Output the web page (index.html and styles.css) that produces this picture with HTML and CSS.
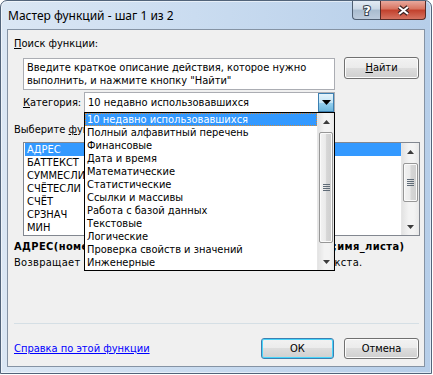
FILE: index.html
```html
<!DOCTYPE html>
<html lang="ru">
<head>
<meta charset="utf-8">
<title>Мастер функций</title>
<link rel="stylesheet" href="styles.css">
</head>
<body>
<div class="window">
  <div class="titlebar">
    <span class="title">Мастер функций - шаг 1 из 2</span>
    <div class="caption-btns">
      <div class="cbtn help">
        <svg width="14" height="16" viewBox="0 0 14 16"><text x="7" y="13" text-anchor="middle" class="qmark">?</text></svg>
      </div>
      <div class="cbtn close">
        <svg width="15" height="11" viewBox="0 0 15 11"><path d="M3 2 L12 9 M12 2 L3 9" stroke="#3b2222" stroke-width="4.2" fill="none"/><path d="M3 2 L12 9 M12 2 L3 9" stroke="#fff" stroke-width="2" fill="none"/></svg>
      </div>
    </div>
  </div>
  <div class="client">
    <div class="lbl top-label"><u>П</u>оиск функции:</div>
    <div class="search-row">
      <div class="search-box">Введите краткое описание действия, которое нужно выполнить, и нажмите кнопку "Найти"</div>
      <div class="btn btn-find"><u>Н</u>айти</div>
    </div>
    <div class="cat-row">
      <span class="cat-label"><u>К</u>атегория:</span>
      <div class="combo">
        <span class="combo-text">10 недавно использовавшихся</span>
        <span class="combo-arrow"><svg width="9" height="5" viewBox="0 0 9 5"><polygon points="0,0 9,0 4.5,5" fill="#000"/></svg></span>
        <div class="dropdown">
          <div class="dd-items">
            <div class="dd-item sel">10 недавно использовавшихся</div>
            <div class="dd-item">Полный алфавитный перечень</div>
            <div class="dd-item">Финансовые</div>
            <div class="dd-item">Дата и время</div>
            <div class="dd-item">Математические</div>
            <div class="dd-item">Статистические</div>
            <div class="dd-item">Ссылки и массивы</div>
            <div class="dd-item">Работа с базой данных</div>
            <div class="dd-item">Текстовые</div>
            <div class="dd-item">Логические</div>
            <div class="dd-item">Проверка свойств и значений</div>
            <div class="dd-item">Инженерные</div>
          </div>
          <div class="scrollbar sb-dd">
            <div class="sb-btn"><svg width="7" height="4" viewBox="0 0 7 4"><polygon points="0,4 7,4 3.5,0" fill="#3c3c3c"/></svg></div>
            <div class="sb-thumb thumb-dd"><span class="grip"></span></div>
            <div class="sb-fill"></div>
            <div class="sb-btn"><svg width="7" height="4" viewBox="0 0 7 4"><polygon points="0,0 7,0 3.5,4" fill="#3c3c3c"/></svg></div>
          </div>
        </div>
      </div>
    </div>
    <div class="lbl choose-label">Выберите <u>ф</u>ункцию:</div>
    <div class="func-list">
      <div class="fl-items">
        <div class="fl-item sel">АДРЕС</div>
        <div class="fl-item">БАТТЕКСТ</div>
        <div class="fl-item">СУММЕСЛИ</div>
        <div class="fl-item">СЧЁТЕСЛИ</div>
        <div class="fl-item">СЧЁТ</div>
        <div class="fl-item">СРЗНАЧ</div>
        <div class="fl-item">МИН</div>
      </div>
      <div class="scrollbar sb-fl">
        <div class="sb-btn"><svg width="7" height="4" viewBox="0 0 7 4"><polygon points="0,4 7,4 3.5,0" fill="#3c3c3c"/></svg></div>
        <div class="sb-thumb thumb-fl"><span class="grip"></span></div>
        <div class="sb-fill"></div>
        <div class="sb-btn"><svg width="7" height="4" viewBox="0 0 7 4"><polygon points="0,0 7,0 3.5,4" fill="#3c3c3c"/></svg></div>
      </div>
    </div>
    <div class="lbl syntax">АДРЕС(номер_строки;номер_столбца;тип_ссылки;a1;имя_листа)</div>
    <div class="lbl desc">Возвращает ссылку на отдельную ячейку листа в виде текста.</div>
    <div class="separator"></div>
    <div class="bottom-row">
      <span class="help-link">Справка по этой функции</span>
      <div class="btn btn-ok">ОК</div>
      <div class="btn btn-cancel">Отмена</div>
    </div>
  </div>
</div>
</body>
</html>
```
FILE: styles.css
```css
html, body {
  margin: 0;
  padding: 0;
  background: #ffffff;
}
body {
  font-family: "DejaVu Sans Condensed", "DejaVu Sans", sans-serif;
  font-size: 11px;
  color: #000;
}
.window {
  width: 432px;
  height: 374px;
  box-sizing: border-box;
  border: 1px solid #52647a;
  border-radius: 7px 7px 0 0;
  background: linear-gradient(to right, #dbe7f4 0%, #cadcf0 45%, #b6cee9 100%);
  padding: 0 6px 6px 6px;
  display: flex;
  flex-direction: column;
  box-shadow: inset 0 0 0 1px rgba(255,255,255,0.55);
}
.titlebar {
  height: 28px;
  display: flex;
  align-items: flex-start;
  flex: none;
}
.title {
  flex: 1;
  padding: 7px 0 0 1px;
  font-family: "Noto Sans", "Open Sans", sans-serif;
  font-size: 12px;
  line-height: 16px;
  color: #000;
}
.caption-btns {
  display: flex;
  margin-right: -1px;
}
.cbtn {
  height: 19px;
  box-sizing: border-box;
  display: flex;
  align-items: center;
  justify-content: center;
  border: 1px solid #4f5f72;
  border-top: none;
}
.help {
  width: 28px;
  border-radius: 0 0 0 4px;
  border-right: none;
  background: linear-gradient(#e3ebf4 0%, #cbd8e6 45%, #a9bccf 50%, #bccbdc 100%);
}
.close {
  width: 46px;
  border-radius: 0 0 4px 0;
  border-color: #5a2c28;
  background: linear-gradient(#e8a89d 0%, #d8735f 45%, #c2402c 50%, #d67361 100%);
}
.qmark {
  font-family: "DejaVu Sans", sans-serif;
  font-weight: bold;
  font-size: 13px;
  fill: #ffffff;
  stroke: #34404d;
  stroke-width: 2px;
  paint-order: stroke;
}
.client {
  flex: 1;
  background: #f0f0f0;
  border: 1px solid #8593a4;
  padding: 7px 5px 0 6px;
  display: flex;
  flex-direction: column;
}
.lbl {
  height: 14px;
  line-height: 14px;
  white-space: nowrap;
}
.search-row {
  margin-top: 6px;
  height: 33px;
  display: flex;
  align-items: flex-start;
}
.search-box {
  margin: 1px 0 0 9px;
  width: 312px;
  height: 32px;
  box-sizing: border-box;
  border: 1px solid #abadb3;
  background: #fff;
  padding: 2px 3px;
  line-height: 13px;
  overflow: hidden;
}
.btn {
  box-sizing: border-box;
  height: 22px;
  border: 1px solid #707070;
  border-radius: 3px;
  background: linear-gradient(#f2f2f2 0%, #ebebeb 49%, #dddddd 50%, #cfcfcf 100%);
  box-shadow: inset 0 0 0 1px #fcfcfc;
  display: flex;
  align-items: center;
  justify-content: center;
  line-height: 14px;
}
.btn-find {
  margin-left: 9px;
  width: 75px;
}
.cat-row {
  margin-top: 2px;
  height: 21px;
  display: flex;
  align-items: center;
}
.cat-label {
  margin-left: 9px;
  width: 61px;
  line-height: 14px;
}
.combo {
  position: relative;
  width: 251px;
  height: 21px;
  box-sizing: border-box;
  border: 1px solid #abadb3;
  background: #fff;
  display: flex;
}
.combo-text {
  flex: 1;
  padding-left: 3px;
  line-height: 19px;
}
.combo-arrow {
  width: 16px;
  height: 19px;
  box-sizing: border-box;
  border: 1px solid #3c7fb1;
  background: linear-gradient(#e5f4fc 0%, #c4e5f6 50%, #98d1ef 51%, #6cb6dd 100%);
  display: flex;
  align-items: center;
  justify-content: center;
}
.dropdown {
  position: absolute;
  left: -1px;
  top: 19px;
  width: 251px;
  height: 159px;
  box-sizing: border-box;
  border: 1px solid #000;
  background: #fff;
  display: flex;
  z-index: 10;
}
.dd-items {
  flex: 1;
  overflow: hidden;
}
.dd-item {
  height: 13px;
  line-height: 13px;
  padding-left: 2px;
  white-space: nowrap;
  overflow: hidden;
}
.dd-item.sel {
  background: #3399ff;
  color: #fff;
  border: 1px dotted #d28a3a;
  line-height: 11px;
  height: 11px;
  padding-left: 1px;
}
.scrollbar {
  display: flex;
  flex-direction: column;
  background: linear-gradient(to right, #e3e3e3, #f3f3f3 40%, #f3f3f3 70%, #e8e8e8);
  border-left: 1px solid #e6e6e6;
}
.sb-dd {
  width: 16px;
}
.sb-fl {
  width: 17px;
}
.sb-btn {
  height: 17px;
  display: flex;
  align-items: center;
  justify-content: center;
  flex: none;
}
.sb-fill {
  flex: 1;
}
.sb-thumb {
  margin: 2px 1px 0 1px;
  box-sizing: border-box;
  border: 1px solid #979797;
  border-radius: 2px;
  background: linear-gradient(to right, #f2f2f2 0%, #ebebeb 45%, #d6d6d6 55%, #cfcfcf 100%);
  box-shadow: inset 0 0 0 1px #fafafa;
  display: flex;
  align-items: center;
  justify-content: center;
  flex: none;
}
.thumb-dd {
  height: 111px;
}
.thumb-fl {
  height: 39px;
  margin-top: 3px;
}
.grip {
  width: 7px;
  height: 7px;
  background: repeating-linear-gradient(#5f6b77 0, #5f6b77 1px, transparent 1px, transparent 2px);
}
.choose-label {
  margin-top: 10px;
}
.func-list {
  margin: 5px 0 0 9px;
  width: 397px;
  height: 94px;
  box-sizing: border-box;
  border: 1px solid #828790;
  background: #fff;
  display: flex;
  flex: none;
}
.fl-items {
  flex: 1;
  padding-left: 1px;
}
.fl-item {
  height: 13px;
  line-height: 13px;
  padding-left: 2px;
  white-space: nowrap;
}
.fl-item.sel {
  background: #3399ff;
  color: #fff;
}
.syntax {
  margin-top: 4px;
  font-weight: bold;
  letter-spacing: 0.4px;
}
.desc {
  margin-top: 2px;
  letter-spacing: 0.3px;
}
.separator {
  margin-top: 53px;
  height: 1px;
  background: #d5dfe5;
}
.bottom-row {
  margin-top: 14px;
  height: 21px;
  display: flex;
  align-items: center;
}
.help-link {
  color: #0000ff;
  text-decoration: underline;
  line-height: 14px;
  margin-right: auto;
}
.btn-ok {
  width: 73px;
  height: 21px;
  border-color: #3c7fb1;
  box-shadow: inset 0 0 0 1px #48d5fb;
}
.btn-cancel {
  width: 75px;
  height: 21px;
  margin-left: 10px;
}
```
